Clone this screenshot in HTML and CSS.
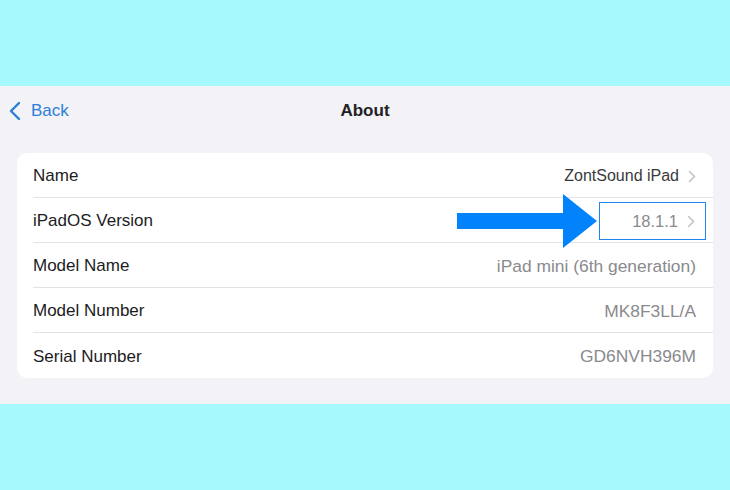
FILE: index.html
```html
<!DOCTYPE html>
<html>
<head>
    <title>About</title>
    <link rel="stylesheet" href="styles.css">
</head>
<body>
    <div class="band"></div>
    <div class="screen">
        <div class="navBar">
            <a class="back" href="#">
                <svg width="12" height="20" viewBox="0 0 12 20"><path d="M10 2 L2 10 L10 18" fill="none" stroke="#2c7fd8" stroke-width="2.4" stroke-linecap="round" stroke-linejoin="round"/></svg>
                <span>Back</span>
            </a>
            <h1>About</h1>
        </div>
        <dl class="card">
            <div class="row">
                <dt>Name</dt>
                <dd class="dark">ZontSound iPad
                    <svg class="chev" width="8" height="13" viewBox="0 0 8 13"><path d="M1.5 1.5 L6.5 6.5 L1.5 11.5" fill="none" stroke="#c3c3c7" stroke-width="1.6" stroke-linecap="round" stroke-linejoin="round"/></svg>
                </dd>
            </div>
            <div class="row">
                <dt>iPadOS Version</dt>
                <dd class="marked">18.1.1
                    <svg class="chev" width="8" height="13" viewBox="0 0 8 13"><path d="M1.5 1.5 L6.5 6.5 L1.5 11.5" fill="none" stroke="#c3c3c7" stroke-width="1.6" stroke-linecap="round" stroke-linejoin="round"/></svg>
                </dd>
                <svg class="arrow" width="142" height="54" viewBox="0 0 142 54"><path d="M0 19 H106 V0 L140 27 L106 54 V35 H0 Z" fill="#0283fb"/></svg>
            </div>
            <div class="row">
                <dt>Model Name</dt>
                <dd>iPad mini (6th generation)</dd>
            </div>
            <div class="row">
                <dt>Model Number</dt>
                <dd>MK8F3LL/A</dd>
            </div>
            <div class="row">
                <dt>Serial Number</dt>
                <dd>GD6NVH396M</dd>
            </div>
        </dl>
    </div>
    <div class="band"></div>
</body>
</html>
```

FILE: styles.css
```css
body {
    margin: 0;
    padding: 0;
    font-family: 'Liberation Sans', Arial, sans-serif;
    background: #a6f9fd;
    color: #1c1c1e;
}
.band {height: 86px;}

.screen {
    height: 318px;
    background: #f2f2f7;
    display: flex;
    flex-direction: column;
}

.navBar {
    height: 48px;
    padding-top: 2px;
    box-sizing: border-box;
    display: flex;
    align-items: center;
    justify-content: center;
    position: relative;
}
.navBar h1 {
    margin: 0;
    font-size: 17px;
    font-weight: bold;
    color: #222;
}
.back {
    position: absolute;
    left: 9px;
    top: 2px;
    bottom: 0;
    display: flex;
    align-items: center;
    gap: 10px;
    color: #2c7fd8;
    text-decoration: none;
    font-size: 17px;
}

.card {
    margin: 19px 17px 0;
    padding: 0;
    background: #fff;
    border-radius: 10px;
}
.row {
    height: 45px;
    padding-top: 2px;
    display: flex;
    align-items: center;
    justify-content: space-between;
    margin-left: 16px;
    padding-right: 17px;
    border-bottom: 1px solid #e3e3e7;
    box-sizing: border-box;
    position: relative;
}
.row:last-child {border-bottom: none;}
.row > dt {
    margin: 0;
    font-size: 17px;
}
.row > dd {
    margin: 0;
    font-size: 17.4px;
    color: #8a8a8e;
    display: flex;
    align-items: center;
    gap: 9px;
}
.row > dd.dark {
    color: #3a3a3c;
    font-size: 16px;
}
.row > dd.marked {
    height: 38px;
    padding: 0 10px 0 32px;
    margin-right: -10px;
    border: 1px solid #1f86ee;
    box-sizing: border-box;
    font-size: 16.5px;
}
.chev {display: block;}
.arrow {
    position: absolute;
    left: 424px;
    top: -4px;
}
```
